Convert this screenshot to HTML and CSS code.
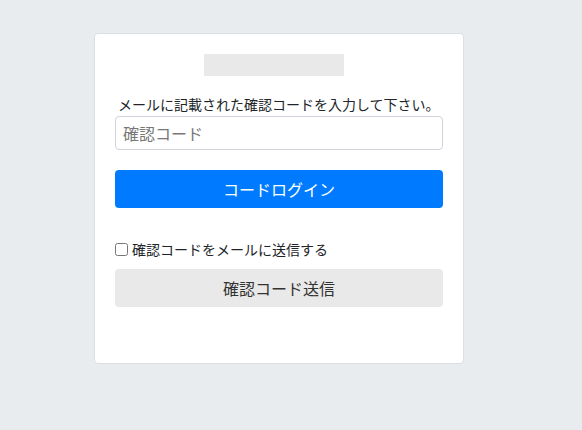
FILE: index.html
```html
<!DOCTYPE html>
<html lang="ja">
<head>
<meta charset="utf-8">
<link rel="stylesheet" href="styles.css">
</head>
<body>
<div class="page">
  <div class="card">
    <div class="logo-row"><div class="logo"></div></div>
    <label class="label" for="code">メールに記載された確認コードを入力して下さい。</label>
    <input id="code" class="input" type="text" placeholder="確認コード">
    <button class="btn btn-primary">コードログイン</button>
    <label class="check-row"><input type="checkbox" class="check"><span>確認コードをメールに送信する</span></label>
    <button class="btn btn-gray">確認コード送信</button>
  </div>
</div>
</body>
</html>
```
FILE: styles.css
```css
html, body {
  margin: 0;
  padding: 0;
  background: #e9ecef;
  font-family: "Noto Sans CJK JP", "Noto Sans", sans-serif;
  color: #212529;
}
.page {
  width: 582px;
  height: 430px;
  padding-top: 33px;
  padding-left: 94px;
  box-sizing: border-box;
}
.card {
  width: 370px;
  height: 331px;
  box-sizing: border-box;
  background: #fff;
  border: 1px solid #dcdfe2;
  border-radius: 4px;
  padding: 20px 20px 20px 20px;
  display: flex;
  flex-direction: column;
}
.logo-row {
  display: flex;
  justify-content: center;
  padding-right: 10px;
}
.logo {
  width: 140px;
  height: 22px;
  background: #e9e9e9;
}
.label {
  display: block;
  margin-top: 18px;
  padding-left: 3px;
  font-size: 14px;
  line-height: 21px;
  height: 22px;
  white-space: nowrap;
}
.input {
  display: block;
  width: 328px;
  height: 34px;
  box-sizing: border-box;
  border: 1px solid #ced4da;
  border-radius: 4px;
  padding: 0 7px;
  font-family: inherit;
  font-size: 16px;
  color: #495057;
  margin: 0;
}
.input::placeholder {
  color: #777;
}
.btn {
  display: block;
  width: 328px;
  height: 38px;
  border: none;
  border-radius: 4px;
  font-family: inherit;
  font-size: 16px;
  padding: 0;
  margin: 0;
}
.btn-primary {
  margin-top: 20px;
  background: #007bff;
  color: #fff;
}
.check-row {
  display: flex;
  align-items: center;
  margin-top: 31px;
  height: 20px;
  font-size: 14px;
  gap: 4px;
}
.check {
  margin: 0;
  width: 13px;
  height: 13px;
}
.btn-gray {
  margin-top: 10px;
  background: #e9e9e9;
  color: #333;
}
```
